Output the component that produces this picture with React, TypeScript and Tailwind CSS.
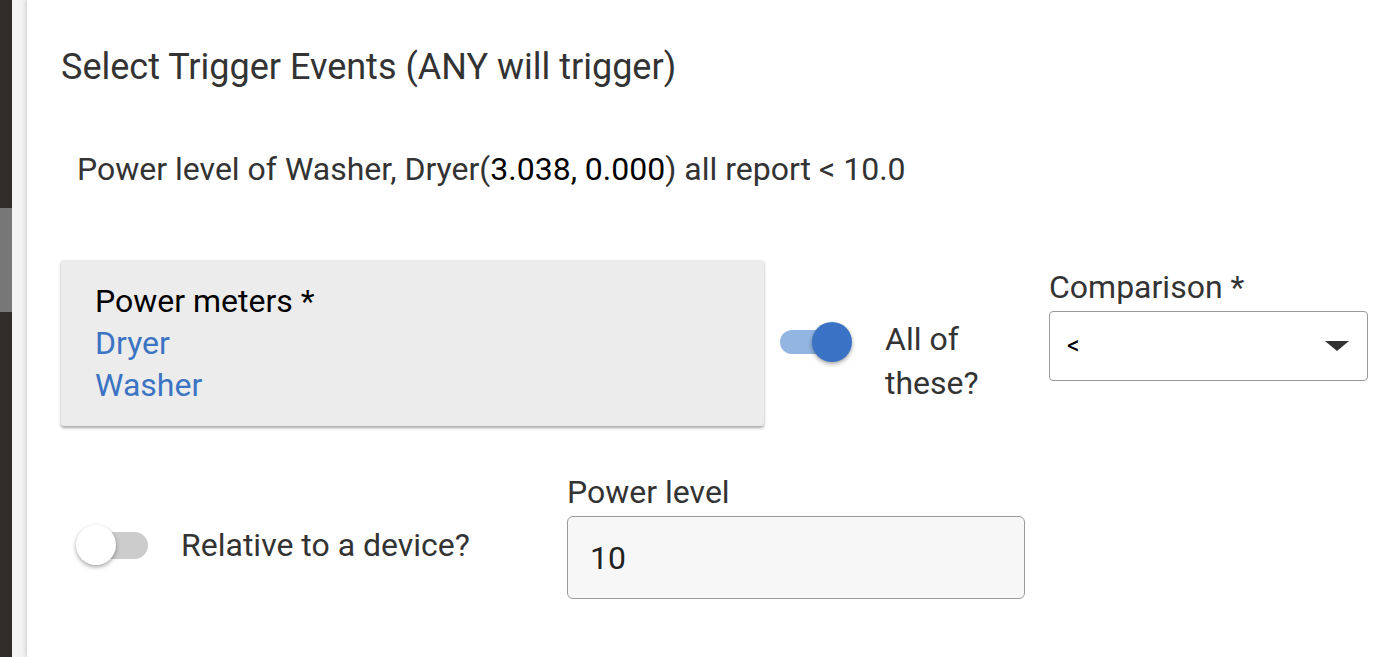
export default function App() {
  return (
    <div className="h-[657px] w-[1393px] overflow-hidden flex bg-white" style={{ fontFamily: "Roboto, 'Liberation Sans', sans-serif" }}>
      <div className="w-[12px] h-full bg-[#322c28] flex flex-col">
        <div className="h-[208px]" />
        <div className="h-[104px] bg-[#777777]" />
      </div>
      <div className="w-[15px] h-full bg-[#f3f3f3]" />
      <div className="flex-1 h-full bg-white shadow-[-2px_0_4px_rgba(0,0,0,0.12)] pl-[34px] pt-[45px] text-[#333333]">
        <h2 className="text-[36px] leading-[44px]">Select Trigger Events (ANY will trigger)</h2>

        <p className="mt-[60px] ml-[16px] text-[32px] leading-[40px]">
          Power level of Washer, Dryer(<span className="text-black">3.038, 0.000</span>) all report &lt; 10.0
        </p>

        <div className="mt-[71px] flex items-start">
          <div className="w-[703px] h-[166px] bg-[#ececec] rounded-[3px] shadow-[0_2px_3px_rgba(0,0,0,0.35)] pl-[34px] pt-[20px] text-[32px] leading-[42px]">
            <div className="text-black">Power meters *</div>
            <div className="text-[#3b74c3]">Dryer</div>
            <div className="text-[#3b74c3]">Washer</div>
          </div>

          <div className="ml-[16px] mt-[60px] w-[269px] flex items-start">
            <div className="relative w-[72px] h-[44px] flex items-center">
              <div className="w-[70px] h-[24px] rounded-full bg-[#92b5e2]" />
              <div className="absolute left-[32px] top-[2px] w-[40px] h-[40px] rounded-full bg-[#3a72c5] shadow-[0_2px_4px_rgba(0,0,0,0.35)]" />
            </div>
            <div className="ml-[33px] mt-[-3px] text-[32px] leading-[44px]">
              All of
              <br />
              these?
            </div>
          </div>

          <div className="mt-[9px] flex flex-col">
            <label className="text-[32px] leading-[36px]">Comparison *</label>
            <div className="mt-[6px] w-[319px] h-[70px] border-[1.5px] border-[#9a9a9a] rounded-[4px] flex items-center justify-between pl-[17px] pr-[18px]">
              <span className="text-[25px] text-black">&lt;</span>
              <svg width="24" height="10" viewBox="0 0 24 10">
                <path d="M0 0 L24 0 L12 10 Z" fill="#333333" />
              </svg>
            </div>
          </div>
        </div>

        <div className="mt-[48px] flex items-start">
          <div className="w-[506px] flex items-start">
            <div className="ml-[15px] mt-[49px] relative w-[72px] h-[44px] flex items-center">
              <div className="ml-[4px] w-[68px] h-[27px] rounded-full bg-[#cccccc]" />
              <div className="absolute left-0 top-[2px] w-[40px] h-[40px] rounded-full bg-white shadow-[0_2px_4px_rgba(0,0,0,0.35)]" />
            </div>
            <div className="ml-[33px] mt-[53px] text-[32px] leading-[36px]">Relative to a device?</div>
          </div>

          <div className="flex flex-col">
            <label className="text-[32px] leading-[36px]">Power level</label>
            <div className="mt-[6px] w-[458px] h-[83px] bg-[#f7f7f7] border-[1.5px] border-[#9a9a9a] rounded-[6px] flex items-center pl-[22px]">
              <span className="text-[32px] text-[#222222]">10</span>
            </div>
          </div>
        </div>
      </div>
    </div>
  )
}
